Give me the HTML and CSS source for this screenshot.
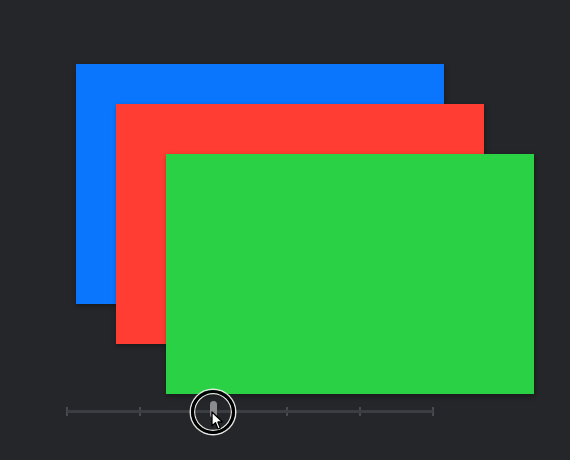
FILE: index.html
```html
<!DOCTYPE html>
<html lang="en">
<head>
    <meta charset="UTF-8">
    <meta name="viewport" content="width=device-width, initial-scale=1.0">
    <title>Cards</title>
    <link rel="stylesheet" href="styles.css">
</head>
<body>
    <div class="stack">
        <div class="card blue"></div>
        <div class="card red"></div>
        <div class="card green"></div>
    </div>

    <div class="slider">
        <div class="track"></div>
        <div class="ticks">
            <span></span><span></span><span></span><span></span><span></span><span></span>
        </div>
        <div class="thumb"></div>
        <div class="touch">
            <svg class="pointer" width="14" height="20" viewBox="0 0 14 20">
                <path d="M1 1 L1 15 L4.5 11.8 L7 18 L9.3 17 L6.9 11 L11.5 11 Z" fill="#fff" stroke="#000" stroke-width="1.3" stroke-linejoin="round"/>
            </svg>
        </div>
    </div>
</body>
</html>
```

FILE: styles.css
```css
/* Загальні стилі */
body {
    margin: 0;
    padding: 0;
    background: #242629;
    min-height: 100vh;
    font-family: 'Liberation Sans', Arial, sans-serif;
}

/* Картки */
.stack {
    display: grid;
    padding: 64px 0 0 76px;
}

.card {
    grid-area: 1 / 1;
    width: 368px;
    height: 240px;
    box-shadow: 1px 2px 5px rgba(0, 0, 0, 0.35);
}

.blue {
    background: #0a76fe;
}

.red {
    background: #ff3d33;
    margin: 40px 0 0 40px;
}

.green {
    background: #2ad144;
    margin: 90px 0 0 90px;
}

/* Повзунок */
.slider {
    position: relative;
    width: 366px;
    height: 20px;
    margin: 7px 0 0 67px;
}

.track {
    position: absolute;
    left: 0;
    right: 0;
    top: 9px;
    height: 3px;
    background: #3a3d42;
}

.ticks {
    display: flex;
    justify-content: space-between;
    height: 100%;
    align-items: center;
    margin: 0 -1px;
}

.ticks span {
    width: 2px;
    height: 9px;
    background: #474a50;
}

.thumb {
    position: absolute;
    left: 143px;
    top: 0;
    width: 7px;
    height: 17px;
    border-radius: 4px;
    background: #8c8c8e;
}

.touch {
    position: absolute;
    left: 124px;
    top: -11px;
    width: 38px;
    height: 38px;
    border-radius: 50%;
    border: 3px solid #000;
    box-shadow: 0 0 0 1.5px #e6e6e6, inset 0 0 0 1.2px #e6e6e6;
}

.pointer {
    position: absolute;
    left: 17px;
    top: 18px;
}
```
